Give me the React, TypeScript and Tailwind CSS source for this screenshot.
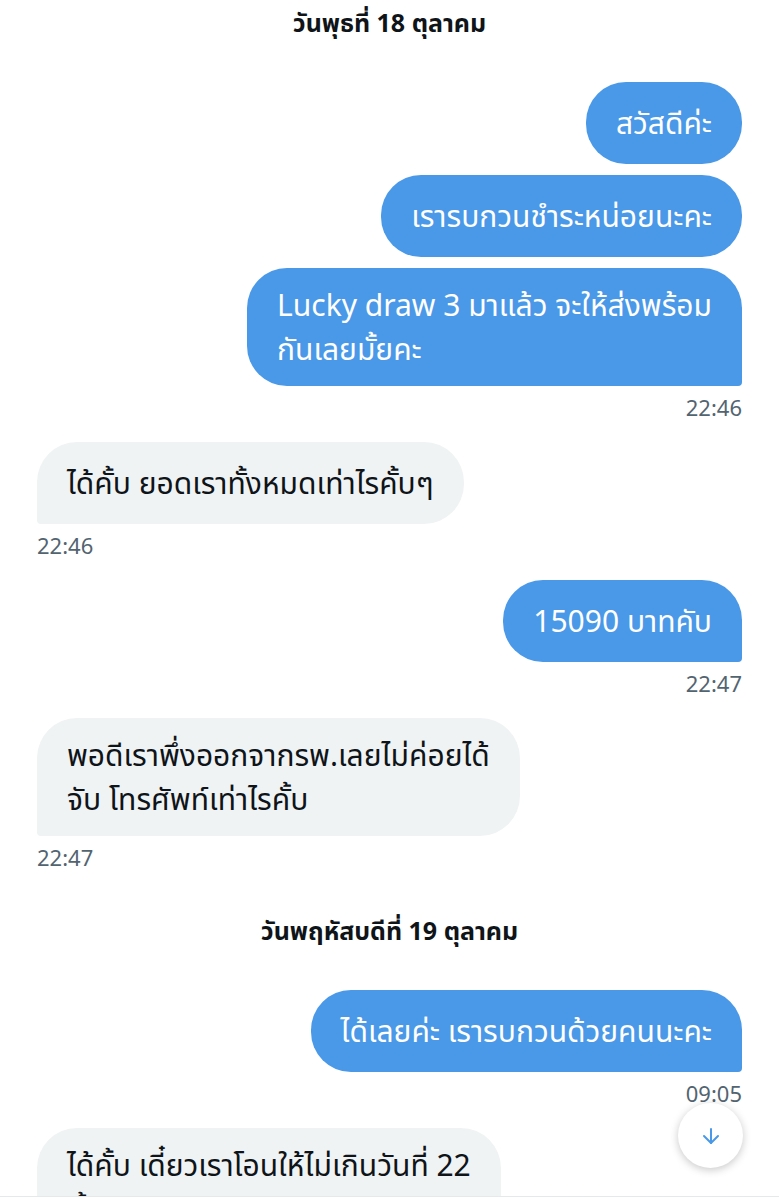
import { ArrowDown } from "lucide-react";

type Msg = {
  from: "me" | "them";
  lines: string[];
  time?: string;
};

const FONT = "font-['Noto_Sans','Noto_Sans_Thai','Liberation_Sans',sans-serif]";

function DayHeader({ label }: { label: string }) {
  return (
    <div className="flex h-8 items-center justify-center">
      <span className="text-[25px] font-bold leading-8 text-[#0f1419]">{label}</span>
    </div>
  );
}

function Bubble({ msg, last }: { msg: Msg; last?: boolean }) {
  const mine = msg.from === "me";
  const multi = msg.lines.length > 1;
  const corner = last
    ? mine
      ? "rounded-[40px] rounded-br-[4px]"
      : "rounded-[40px] rounded-bl-[4px]"
    : "rounded-[40px]";

  return (
    <div className={`flex flex-col ${mine ? "items-end" : "items-start"}`}>
      <div
        className={`${corner} px-[30px] ${multi ? "py-[15px]" : "py-[19px]"} text-[30px] leading-[44px] whitespace-nowrap ${
          mine ? "bg-[#4a98e8] text-white" : "bg-[#eff3f4] text-[#0f1419]"
        }`}
      >
        {msg.lines.map((l) => (
          <div key={l}>{l}</div>
        ))}
      </div>
      {msg.time && (
        <div className="mt-[7px] h-7 text-[22px] leading-7 text-[#536471]">{msg.time}</div>
      )}
    </div>
  );
}

export default function App() {
  return (
    <div className={`relative h-[1200px] w-[779px] overflow-hidden bg-white ${FONT}`}>
      <div className="h-[1196px] overflow-hidden px-[37px] pt-[6px]">
        <DayHeader label="วันพุธที่ 18 ตุลาคม" />

        <div className="mt-[44px] flex flex-col gap-[11px]">
          <Bubble msg={{ from: "me", lines: ["สวัสดีค่ะ"] }} />
          <Bubble msg={{ from: "me", lines: ["เรารบกวนชำระหน่อยนะคะ"] }} />
          <Bubble
            msg={{ from: "me", lines: ["Lucky draw 3 มาแล้ว จะให้ส่งพร้อม", "กันเลยมั้ยคะ"], time: "22:46" }}
            last
          />
        </div>

        <div className="mt-[21px]">
          <Bubble msg={{ from: "them", lines: ["ได้คั้บ ยอดเราทั้งหมดเท่าไรคั้บๆ"], time: "22:46" }} last />
        </div>

        <div className="mt-[21px]">
          <Bubble msg={{ from: "me", lines: ["15090 บาทคับ"], time: "22:47" }} last />
        </div>

        <div className="mt-[21px]">
          <Bubble
            msg={{
              from: "them",
              lines: ["พอดีเราพึ่งออกจากรพ.เลยไม่ค่อยได้", "จับ โทรศัพท์เท่าไรคั้บ"],
              time: "22:47",
            }}
            last
          />
        </div>

        <div className="mt-[43px]">
          <DayHeader label="วันพฤหัสบดีที่ 19 ตุลาคม" />
        </div>

        <div className="mt-[44px]">
          <Bubble msg={{ from: "me", lines: ["ได้เลยค่ะ เรารบกวนด้วยคนนะคะ"], time: "09:05" }} last />
        </div>

        <div className="mt-[21px]">
          <Bubble msg={{ from: "them", lines: ["ได้คั้บ เดี๋ยวเราโอนให้ไม่เกินวันที่ 22", "คั้บ"] }} last />
        </div>
      </div>

      <div className="border-t border-[#e6e9ea]" />

      <button className="absolute left-[678px] top-[1103px] flex h-[65px] w-[65px] items-center justify-center rounded-full bg-white shadow-[0_2px_8px_rgba(0,0,0,0.22)]">
        <ArrowDown className="h-6 w-6 text-[#4a98e8]" strokeWidth={2} />
      </button>
    </div>
  );
}
